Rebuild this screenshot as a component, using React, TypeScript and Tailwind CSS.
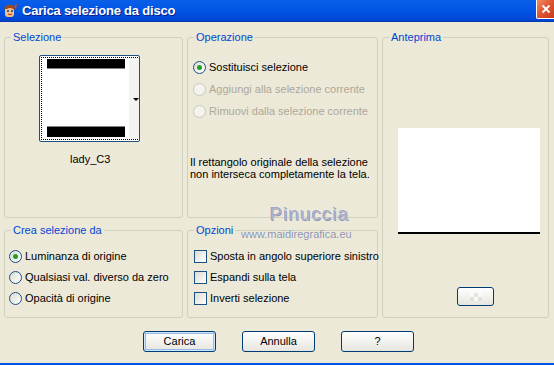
import React from 'react';

const font = { fontFamily: '"Liberation Sans", Arial, sans-serif' };

function Radio({ checked, disabled, label }: { checked?: boolean; disabled?: boolean; label: string }) {
  return (
    <div className="flex items-center h-[13px]">
      <span
        className={`w-[13px] h-[13px] rounded-full border flex items-center justify-center shrink-0 ${
          disabled
            ? 'border-[#cac8bb] bg-[#f4f3ee]'
            : 'border-[#1c5180] bg-gradient-to-br from-[#dcdbd4] to-[#ffffff]'
        }`}
      >
        {checked && <span className="w-[5px] h-[5px] rounded-full bg-[#21a121]" />}
      </span>
      <span className={`ml-[3px] whitespace-nowrap ${disabled ? 'text-[#aca899]' : 'text-black'}`}>{label}</span>
    </div>
  );
}

function Check({ label }: { label: string }) {
  return (
    <div className="flex items-center h-[13px]">
      <span className="w-[13px] h-[13px] border border-[#1c5180] bg-gradient-to-br from-[#dcdbd4] to-[#ffffff] shrink-0" />
      <span className="ml-[3px] whitespace-nowrap">{label}</span>
    </div>
  );
}

function Group({ title, className, children }: { title: string; className?: string; children?: React.ReactNode }) {
  return (
    <fieldset className={`border border-[#d0d0bf] rounded-[3px] min-w-0 ${className ?? ''}`}>
      <legend className="ml-[6px] px-[2px] text-[#0046d5] leading-[13px]">{title}</legend>
      {children}
    </fieldset>
  );
}

function XpButton({ label, isDefault }: { label: string; isDefault?: boolean }) {
  return (
    <button
      className={`w-[73px] h-[21px] rounded-[3px] border border-[#003c74] bg-gradient-to-b from-[#ffffff] to-[#e6e5de] text-black leading-none ${
        isDefault ? 'shadow-[inset_0_0_0_1px_#cee7ff,inset_0_0_0_2px_#98b8ea]' : ''
      }`}
    >
      {label}
    </button>
  );
}

export default function App() {
  return (
    <div className="relative w-[554px] h-[365px] bg-[#ece9d8] text-[11px] text-black overflow-hidden flex flex-col" style={font}>
      {/* title bar */}
      <div className="h-[22px] shrink-0 flex items-center bg-gradient-to-b from-[#0a5fe8] via-[#0055e5] to-[#0044d0] border-b border-[#003bb0]">
        <svg width="16" height="16" viewBox="0 0 16 16" className="ml-[2px]">
          <rect x="3" y="4" width="9" height="10" rx="3" fill="#f4c089" />
          <path d="M2 6 Q4 1 10 2 Q13 3 13 7 L11 6 Q8 4 5 6 Z" fill="#9a4a1a" />
          <circle cx="6" cy="8" r="1" fill="#1c3c8c" />
          <circle cx="10" cy="8" r="1" fill="#1c3c8c" />
          <path d="M12 3 L15 1 L14 6 Z" fill="#d44a2a" />
          <path d="M6 11 Q8 12.5 10 11" stroke="#c03020" strokeWidth="1" fill="none" />
        </svg>
        <span className="ml-[4px] text-white font-bold text-[13px] tracking-[-0.2px] [text-shadow:1px_1px_0_#0a1e8c]">
          Carica selezione da disco
        </span>
        <div className="ml-auto self-start w-[18px] h-[19px] bg-gradient-to-br from-[#f08a64] via-[#e0532f] to-[#c83c1e] border-l border-b border-white rounded-bl-[2px] flex items-center justify-center">
          <svg width="10" height="10" viewBox="0 0 10 10">
            <path d="M1.5 1.5 L8.5 8.5 M8.5 1.5 L1.5 8.5" stroke="#fff" strokeWidth="1.8" />
          </svg>
        </div>
      </div>

      {/* body */}
      <div className="flex-1 flex flex-col">
        <div className="grid grid-cols-[179px_191px_167px] grid-rows-[187px_94px] gap-x-[4px] gap-y-[6px] ml-[4px] mt-[9px]">
          <Group title="Selezione">
            <div className="ml-[34px] mt-[11px] w-[101px] h-[87px] border border-[#1c5180] rounded-[2px] bg-white p-[1px]">
              <div className="relative w-full h-full border border-dotted border-black">
                <div className="ml-[5px] mt-[1px] w-[78px] h-[10px] bg-black border-b border-[#808080]" />
                <div className="absolute left-[87px] top-[0px] w-[10px] h-full bg-[#f3f3f3]" />
                <div className="absolute left-[91px] top-[40px] w-0 h-0 border-l-[3px] border-r-[3px] border-t-[3px] border-l-transparent border-r-transparent border-t-black" />
                <div className="ml-[5px] mt-[57px] w-[78px] h-[11px] bg-black border-t border-[#808080]" />
              </div>
            </div>
            <div className="mt-[9px] ml-[65px]">lady_C3</div>
          </Group>

          <Group title="Operazione">
            <div className="ml-[5px] mt-[17px] flex flex-col gap-[9px]">
              <Radio checked label="Sostituisci selezione" />
              <Radio disabled label="Aggiungi alla selezione corrente" />
              <Radio disabled label="Rimuovi dalla selezione corrente" />
            </div>
            <p className="ml-[2px] mt-[38px] leading-[12px]">
              Il rettangolo originale della selezione
              <br />
              non interseca completamente la tela.
            </p>
          </Group>

          <Group title="Anteprima" className="row-span-2 flex flex-col items-center">
            <div className="mt-[84px] ml-[6px] w-[142px] h-[106px] bg-white border-b-2 border-black" />
            <div className="mt-[53px] ml-[20px] w-[37px] h-[19px] rounded-[3px] border border-[#003c74] bg-gradient-to-b from-[#ffffff] to-[#e6e5de] flex items-center justify-center">
              <div className="grid grid-cols-3 w-[12px] h-[8px] opacity-60">
                <span className="bg-white" />
                <span className="bg-[#d8d8d8]" />
                <span className="bg-white" />
                <span className="bg-[#d8d8d8]" />
                <span className="bg-white" />
                <span className="bg-[#d8d8d8]" />
              </div>
            </div>
          </Group>

          <Group title="Crea selezione da">
            <div className="ml-[4px] mt-[13px] flex flex-col gap-[8px]">
              <Radio checked label="Luminanza di origine" />
              <Radio label="Qualsiasi val. diverso da zero" />
              <Radio label="Opacità di origine" />
            </div>
          </Group>

          <Group title="Opzioni">
            <div className="ml-[6px] mt-[13px] flex flex-col gap-[8px]">
              <Check label="Sposta in angolo superiore sinistro" />
              <Check label="Espandi sulla tela" />
              <Check label="Inverti selezione" />
            </div>
          </Group>
        </div>

        <div className="flex gap-[26px] ml-[143px] mt-[13px]">
          <XpButton label="Carica" isDefault />
          <XpButton label="Annulla" />
          <XpButton label="?" />
        </div>
      </div>

      {/* bottom frame */}
      <div className="h-[2px] shrink-0 bg-[#0055e5]" />

      {/* watermark */}
      <div className="absolute left-[269px] top-[203px] text-[19px] leading-[22px] text-[#a4a8c4] tracking-[1px] [text-shadow:0_0_1px_#ffffff,1px_1px_0_#8a8eaa]" style={font}>
        Pinuccia
      </div>
      <div className="absolute left-[241px] top-[228px] text-[11px] leading-[12px] text-[#8c92ac] [text-shadow:0_0_1px_#ffffff]" style={font}>
        www.maidiregrafica.eu
      </div>
    </div>
  );
}
